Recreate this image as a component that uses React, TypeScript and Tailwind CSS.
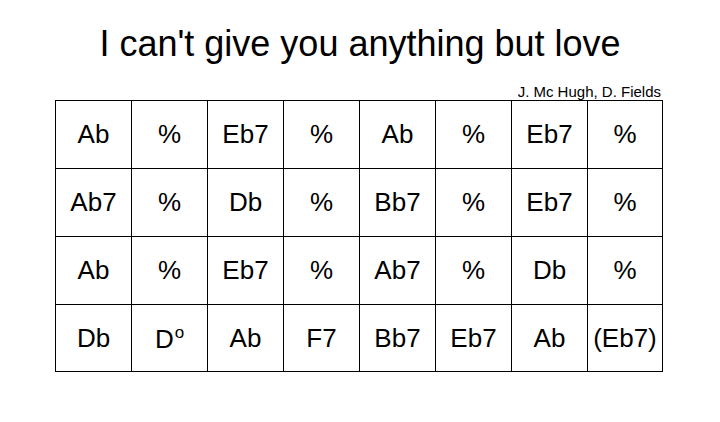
import React from 'react';

const rows: string[][] = [
  ['Ab', '%', 'Eb7', '%', 'Ab', '%', 'Eb7', '%'],
  ['Ab7', '%', 'Db', '%', 'Bb7', '%', 'Eb7', '%'],
  ['Ab', '%', 'Eb7', '%', 'Ab7', '%', 'Db', '%'],
  ['Db', 'Do', 'Ab', 'F7', 'Bb7', 'Eb7', 'Ab', '(Eb7)'],
];

function Chord({ name }: { name: string }) {
  // diminished chord: D with a raised small "o"
  if (name === 'Do') {
    return (
      <span className="pt-[3px]">
        D<span className="text-[17px] align-top ml-[1px]">o</span>
      </span>
    );
  }
  return <span>{name}</span>;
}

export default function App() {
  return (
    <div
      className="w-[720px] h-[422px] bg-white text-black overflow-hidden"
      style={{ fontFamily: '"Liberation Sans", Arial, sans-serif' }}
    >
      <h1 className="pt-[24px] text-center text-[36px] leading-[40px]">
        I can't give you anything but love
      </h1>

      <div className="ml-[55px] w-[608px] mt-[19px] pr-[2px] text-right text-[15px] leading-[17px]">
        J. Mc Hugh, D. Fields
      </div>

      {/* Chord chart */}
      <div className="ml-[55px] grid grid-cols-[repeat(7,76px)_75px] grid-rows-[repeat(3,68px)_67px] w-fit border-l border-t border-black">
        {rows.flatMap((row, r) =>
          row.map((chord, c) => (
            <div
              key={`${r}-${c}`}
              className="flex items-center justify-center border-r border-b border-black text-[26px]"
            >
              <Chord name={chord} />
            </div>
          ))
        )}
      </div>
    </div>
  );
}
